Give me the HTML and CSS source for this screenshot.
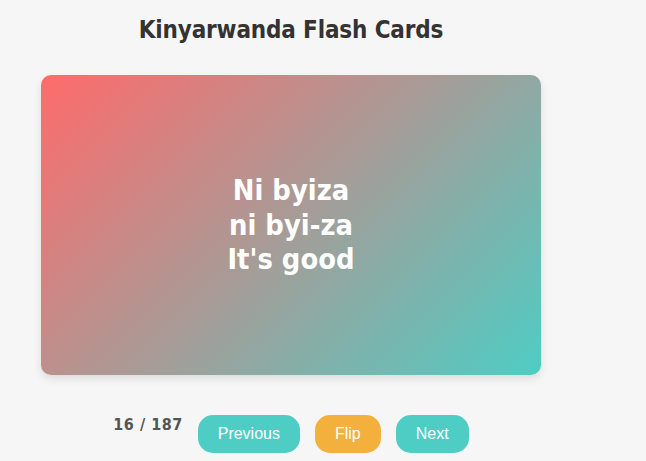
FILE: index.html
```html
<!DOCTYPE html>
<html lang="en">
<head>
<meta charset="utf-8">
<title>Kinyarwanda Flash Cards</title>
<link rel="stylesheet" href="styles.css">
</head>
<body>
  <main class="app">
    <h1 class="title">Kinyarwanda Flash Cards</h1>
    <div class="card">
      <div class="card-text">
        <div>Ni byiza</div>
        <div>ni byi-za</div>
        <div>It's good</div>
      </div>
    </div>
    <div class="controls">
      <span class="counter">16 / 187</span>
      <button class="btn btn-teal" type="button">Previous</button>
      <button class="btn btn-orange" type="button">Flip</button>
      <button class="btn btn-teal" type="button">Next</button>
    </div>
  </main>
</body>
</html>
```

FILE: styles.css
```css
html, body {
  margin: 0;
  padding: 0;
  background: #f6f6f6;
}

body {
  font-family: "DejaVu Sans Condensed", "DejaVu Sans", sans-serif;
  font-stretch: condensed;
}

.app {
  width: 500px;
  margin-left: 41px;
  padding-top: 16px;
}

.title {
  margin: 0;
  font-size: 24px;
  line-height: 29px;
  font-weight: bold;
  color: #333333;
  text-align: center;
  letter-spacing: -0.15px;
}

.card {
  margin-top: 30px;
  height: 300px;
  border-radius: 10px;
  background: linear-gradient(135deg, #ff6b6b, #4ecdc4);
  box-shadow: 0 4px 8px rgba(0, 0, 0, 0.1);
  display: flex;
  align-items: center;
  justify-content: center;
}

.card-text {
  color: #ffffff;
  font-weight: bold;
  font-size: 28.8px;
  line-height: 34.8px;
  text-align: center;
}

.controls {
  margin-top: 40px;
  display: flex;
  justify-content: center;
  align-items: flex-start;
  gap: 15px;
}

.counter {
  font-size: 16px;
  line-height: 19px;
  font-weight: bold;
  color: #555555;
  letter-spacing: 0.5px;
}

.btn {
  font-family: "Liberation Sans", Arial, sans-serif;
  font-size: 16px;
  line-height: 18px;
  padding: 10px 20px;
  border: none;
  border-radius: 15px;
  color: #ffffff;
  cursor: pointer;
}

.btn-teal {
  background: #4ecdc4;
}

.btn-orange {
  background: #f4b03c;
}
```
